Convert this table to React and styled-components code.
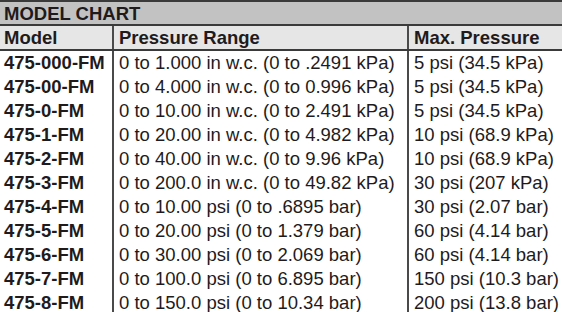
import React from 'react';
import styled, { createGlobalStyle } from 'styled-components';

const GlobalStyle = createGlobalStyle`
  html, body {
    margin: 0;
    padding: 0;
    background: #ffffff;
    overflow: hidden;
  }
`;

const rows = [
  ['475-000-FM', '0 to 1.000 in w.c. (0 to .2491 kPa)', '5 psi (34.5 kPa)'],
  ['475-00-FM', '0 to 4.000 in w.c. (0 to 0.996 kPa)', '5 psi (34.5 kPa)'],
  ['475-0-FM', '0 to 10.00 in w.c. (0 to 2.491 kPa)', '5 psi (34.5 kPa)'],
  ['475-1-FM', '0 to 20.00 in w.c. (0 to 4.982 kPa)', '10 psi (68.9 kPa)'],
  ['475-2-FM', '0 to 40.00 in w.c. (0 to 9.96 kPa)', '10 psi (68.9 kPa)'],
  ['475-3-FM', '0 to 200.0 in w.c. (0 to 49.82 kPa)', '30 psi (207 kPa)'],
  ['475-4-FM', '0 to 10.00 psi (0 to .6895 bar)', '30 psi (2.07 bar)'],
  ['475-5-FM', '0 to 20.00 psi (0 to 1.379 bar)', '60 psi (4.14 bar)'],
  ['475-6-FM', '0 to 30.00 psi (0 to 2.069 bar)', '60 psi (4.14 bar)'],
  ['475-7-FM', '0 to 100.0 psi (0 to 6.895 bar)', '150 psi (10.3 bar)'],
  ['475-8-FM', '0 to 150.0 psi (0 to 10.34 bar)', '200 psi (13.8 bar)'],
];

const App = () => (
  <>
    <GlobalStyle />
    <Chart>
      <Title>MODEL CHART</Title>
      <Table>
        <colgroup>
          <col style={{ width: 113 }} />
          <col style={{ width: 295 }} />
          <col />
        </colgroup>
        <thead>
          <tr>
            <HeadCell>Model</HeadCell>
            <HeadCell>Pressure Range</HeadCell>
            <HeadCell>Max. Pressure</HeadCell>
          </tr>
        </thead>
        <tbody>
          {rows.map(([model, range, max]) => (
            <tr key={model}>
              <Cell bold>{model}</Cell>
              <Cell>{range}</Cell>
              <Cell>{max}</Cell>
            </tr>
          ))}
        </tbody>
      </Table>
    </Chart>
  </>
);

const Chart = styled.div`
  width: 562px;
  overflow: hidden;
  font-family: "Liberation Sans", Arial, sans-serif;
  color: #1f1b1c;
  border-top: 2px solid #3a3a3a;
`;

const Title = styled.div`
  height: 22px;
  line-height: 23px;
  padding-left: 4px;
  background: #c2c2c2;
  font-size: 18.5px;
  font-weight: bold;
  border-bottom: 2px solid #3a3a3a;
`;

const Table = styled.table`
  width: 600px;
  border-collapse: collapse;
  table-layout: fixed;
`;

const HeadCell = styled.th`
  height: 22px;
  padding: 0 0 0 5px;
  text-align: left;
  font-size: 18.5px;
  line-height: 23px;
  font-weight: bold;
  background: #e6e6e6;
  border-bottom: 2px solid #3a3a3a;
  border-left: 2px solid #4a4a4a;
  white-space: nowrap;

  &:first-child {
    border-left: none;
    padding-left: 4px;
  }
`;

const Cell = styled.td`
  height: 24px;
  padding: 0 0 0 5px;
  font-size: 18.5px;
  line-height: 24px;
  font-weight: ${props => (props.bold ? 'bold' : 'normal')};
  border-left: 2px solid #4a4a4a;
  white-space: nowrap;
  overflow: hidden;

  &:first-child {
    border-left: none;
    padding-left: 4px;
  }
`;

export default App;
